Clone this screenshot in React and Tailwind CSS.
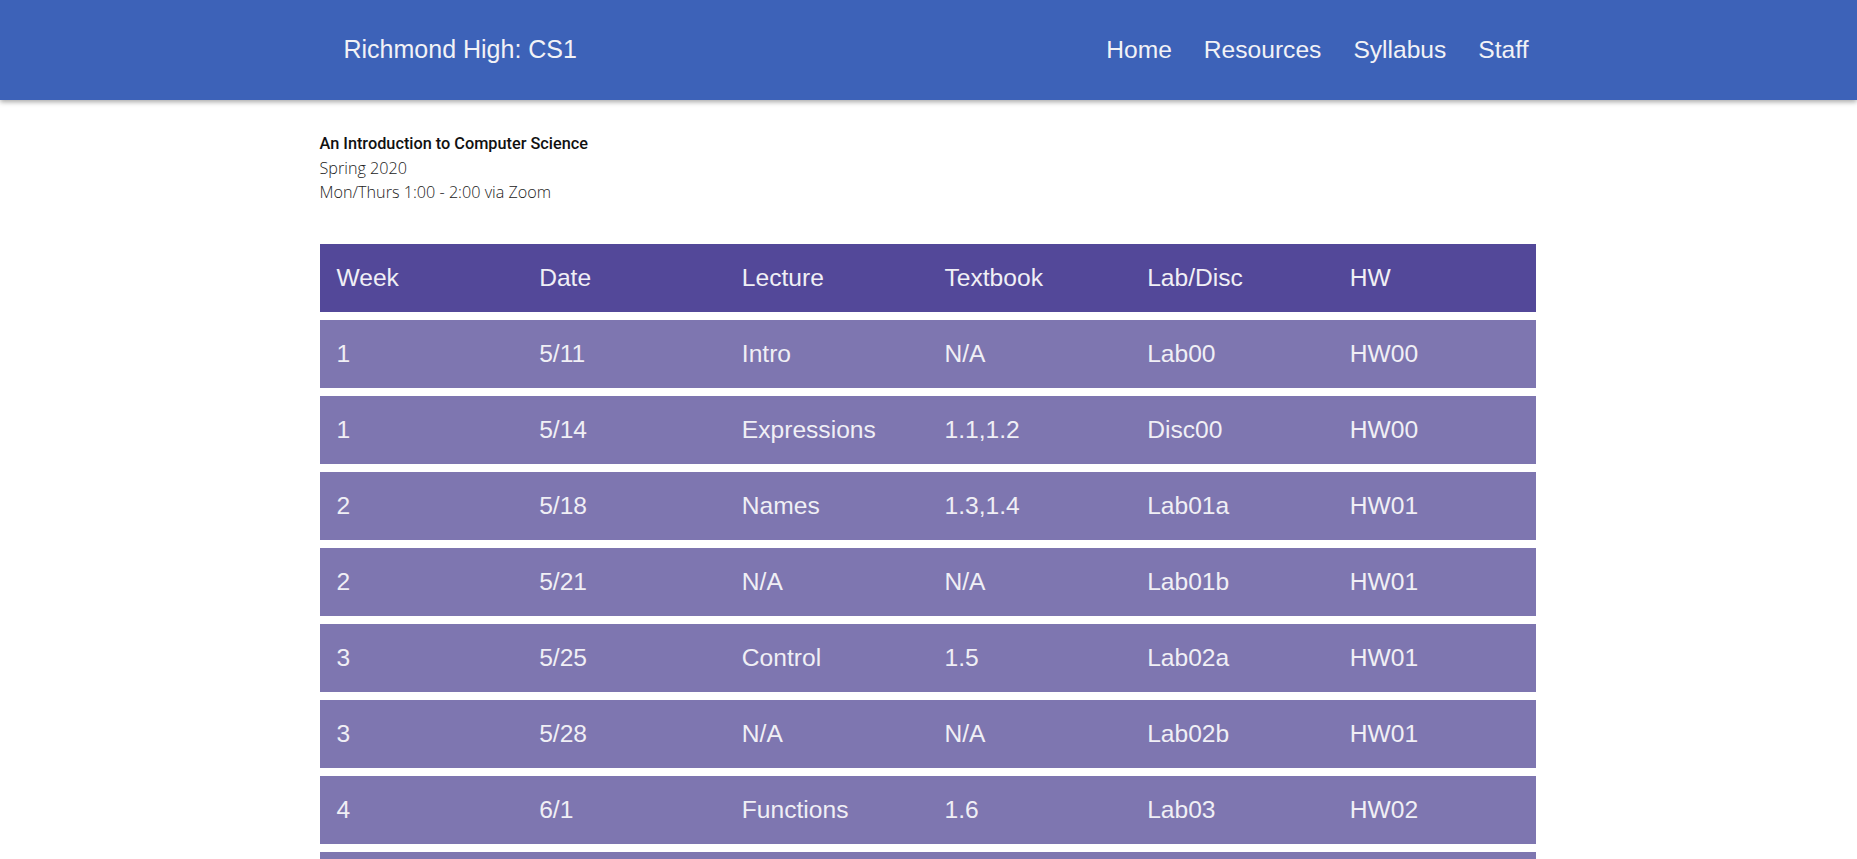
import React from 'react';

const rows = [
  ['1', '5/11', 'Intro', 'N/A', 'Lab00', 'HW00'],
  ['1', '5/14', 'Expressions', '1.1,1.2', 'Disc00', 'HW00'],
  ['2', '5/18', 'Names', '1.3,1.4', 'Lab01a', 'HW01'],
  ['2', '5/21', 'N/A', 'N/A', 'Lab01b', 'HW01'],
  ['3', '5/25', 'Control', '1.5', 'Lab02a', 'HW01'],
  ['3', '5/28', 'N/A', 'N/A', 'Lab02b', 'HW01'],
  ['4', '6/1', 'Functions', '1.6', 'Lab03', 'HW02'],
  ['4', '6/4', 'N/A', 'N/A', 'Disc01', 'HW02'],
];

const Row = ({ cells, head }) => (
  <div
    className={`grid grid-cols-6 h-[68px] items-center text-[24.6px] text-[#f0eff5] ${
      head ? 'bg-[#534899]' : 'bg-[#7e76b0]'
    }`}
  >
    {cells.map((c, i) => (
      <div key={i} className="pl-[17px]">
        {c}
      </div>
    ))}
  </div>
);

const App = () => {
  return (
    <div className="min-h-screen bg-white font-['Liberation_Sans',Arial,sans-serif]">
      {/* Top bar */}
      <header className="h-[100px] bg-[#3d62b8] shadow-[0_2px_5px_rgba(0,0,0,0.35)] relative z-10">
        <div className="w-[1216px] mx-auto h-full flex items-center justify-between pl-[23px] pr-[8px] text-[#f2f2f6]">
          <div className="text-[25px]">Richmond High: CS1</div>
          <nav className="flex gap-8 text-[24.6px]">
            <a>Home</a>
            <a>Resources</a>
            <a>Syllabus</a>
            <a>Staff</a>
          </nav>
        </div>
      </header>

      <main className="w-[1216px] mx-auto -translate-x-px">
        {/* Course info */}
        <div className="pt-[32px] pb-[40px]">
          <p className="font-['Roboto',sans-serif] font-medium text-[16.3px] leading-[24px] text-[#111]">
            An Introduction to Computer Science
          </p>
          <p className="font-['Open_Sans',sans-serif] font-light text-[16.2px] leading-[24px] text-[#222]">
            Spring 2020
          </p>
          <p className="font-['Open_Sans',sans-serif] font-light text-[16.2px] leading-[24px] text-[#222]">
            Mon/Thurs 1:00 - 2:00 via Zoom
          </p>
        </div>

        {/* Schedule */}
        <div className="flex flex-col gap-2 pb-8">
          <Row head cells={['Week', 'Date', 'Lecture', 'Textbook', 'Lab/Disc', 'HW']} />
          {rows.map((r, i) => (
            <Row key={i} cells={r} />
          ))}
        </div>
      </main>
    </div>
  );
};

export default App;
